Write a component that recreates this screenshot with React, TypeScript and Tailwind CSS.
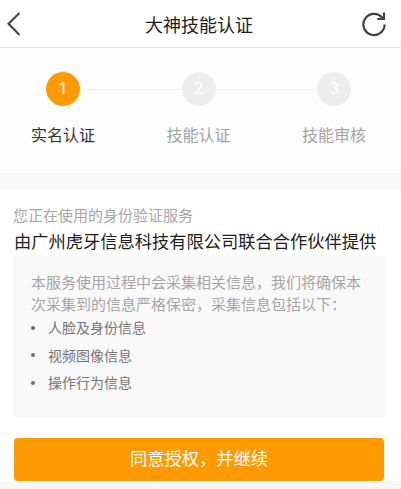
import React from 'react';

const font = { fontFamily: '"Noto Sans CJK SC", sans-serif' };

// full-width punctuation
const COMMA = '\uFF0C';
const COLON = '\uFF1A';

const steps = [
  { n: 1, label: '实名认证', active: true },
  { n: 2, label: '技能认证', active: false },
  { n: 3, label: '技能审核', active: false },
];

const items = ['人脸及身份信息', '视频图像信息', '操作行为信息'];

export default function App() {
  return (
    <div className="w-[401px] h-[489px] overflow-hidden bg-white flex flex-col" style={font}>
      {/* Header */}
      <div className="h-[48px] shrink-0 border-b border-[#e4e4e4] flex items-center justify-between pl-[6px] pr-[14px]">
        <div className="w-[26px]">
          <svg width="16" height="26" viewBox="0 0 16 26" fill="none" stroke="#3f4044" strokeWidth="2">
            <path d="M13.5 2 L2.5 12.8 L13.5 24" />
          </svg>
        </div>
        <h1 className="text-[18px] leading-[24px] text-[#1c1c1c] font-normal ml-[5px]">大神技能认证</h1>
        <svg width="26" height="26" viewBox="0 0 26 26" fill="none" stroke="#3f4044" strokeWidth="2.2">
          <path d="M21.6 7.2 A10.6 10.6 0 1 0 23.6 13.5" />
          <path d="M23 1.5 V8 H16.3" />
        </svg>
      </div>

      {/* Steps */}
      <div className="h-[125px] shrink-0 bg-[#fdfdfd] relative flex justify-between pl-[23px] pr-[27px] pt-[24px]">
        <div className="absolute left-[63px] right-[67px] top-[41px] h-px bg-[#eeeeee]" />
        {steps.map((s) => (
          <div key={s.n} className="relative w-[80px] flex flex-col items-center">
            <div
              className={`w-[34px] h-[34px] rounded-full flex items-center justify-center text-white text-[17px] ${
                s.active ? 'bg-[#ff9a03]' : 'bg-[#eeeeee]'
              }`}
              style={{ fontFamily: 'Roboto, sans-serif' }}
            >
              {s.n}
            </div>
            <span className={`mt-[16px] text-[16px] leading-[24px] ${s.active ? 'text-[#333333]' : 'text-[#a3a3a3]'}`}>
              {s.label}
            </span>
          </div>
        ))}
      </div>

      <div className="h-[17px] shrink-0 bg-[#f8f8f8]" />

      {/* Service info */}
      <div className="flex-1 px-[13px] pt-[14px]">
        <p className="text-[15px] leading-[22px] text-[#a6a6a6]">您正在使用的身份验证服务</p>
        <p className="mt-[2px] ml-px text-[17.25px] leading-[26px] text-[#1c1c1c] whitespace-nowrap">
          由广州虎牙信息科技有限公司联合合作伙伴提供
        </p>
        <div className="mt-[2px] w-[372px] h-[161px] bg-[#f9f9f9] rounded-[2px] pl-[18px] pt-[15px]">
          <p className="text-[15px] leading-[22px] text-[#a6a6a6] whitespace-nowrap">
            本服务使用过程中会采集相关信息{COMMA}我们将确保本
            <br />
            次采集到的信息严格保密{COMMA}采集信息包括以下{COLON}
          </p>
          <ul className="-mt-px">
            {items.map((t) => (
              <li key={t} className="h-[27.5px] flex items-center text-[14px] text-[#757575]">
                <span className="w-[4px] h-[4px] rounded-full bg-[#6e6e6e] mr-[13px]" />
                {t}
              </li>
            ))}
          </ul>
        </div>
        <button className="mt-[21px] ml-px w-[370px] h-[43px] pb-[3px] bg-[#ff9a03] rounded-[4px] text-white text-[17.25px]">
          同意授权{COMMA}并继续
        </button>
      </div>

      <div className="h-[8px] shrink-0 bg-[#f7f7f7]" />
    </div>
  );
}
